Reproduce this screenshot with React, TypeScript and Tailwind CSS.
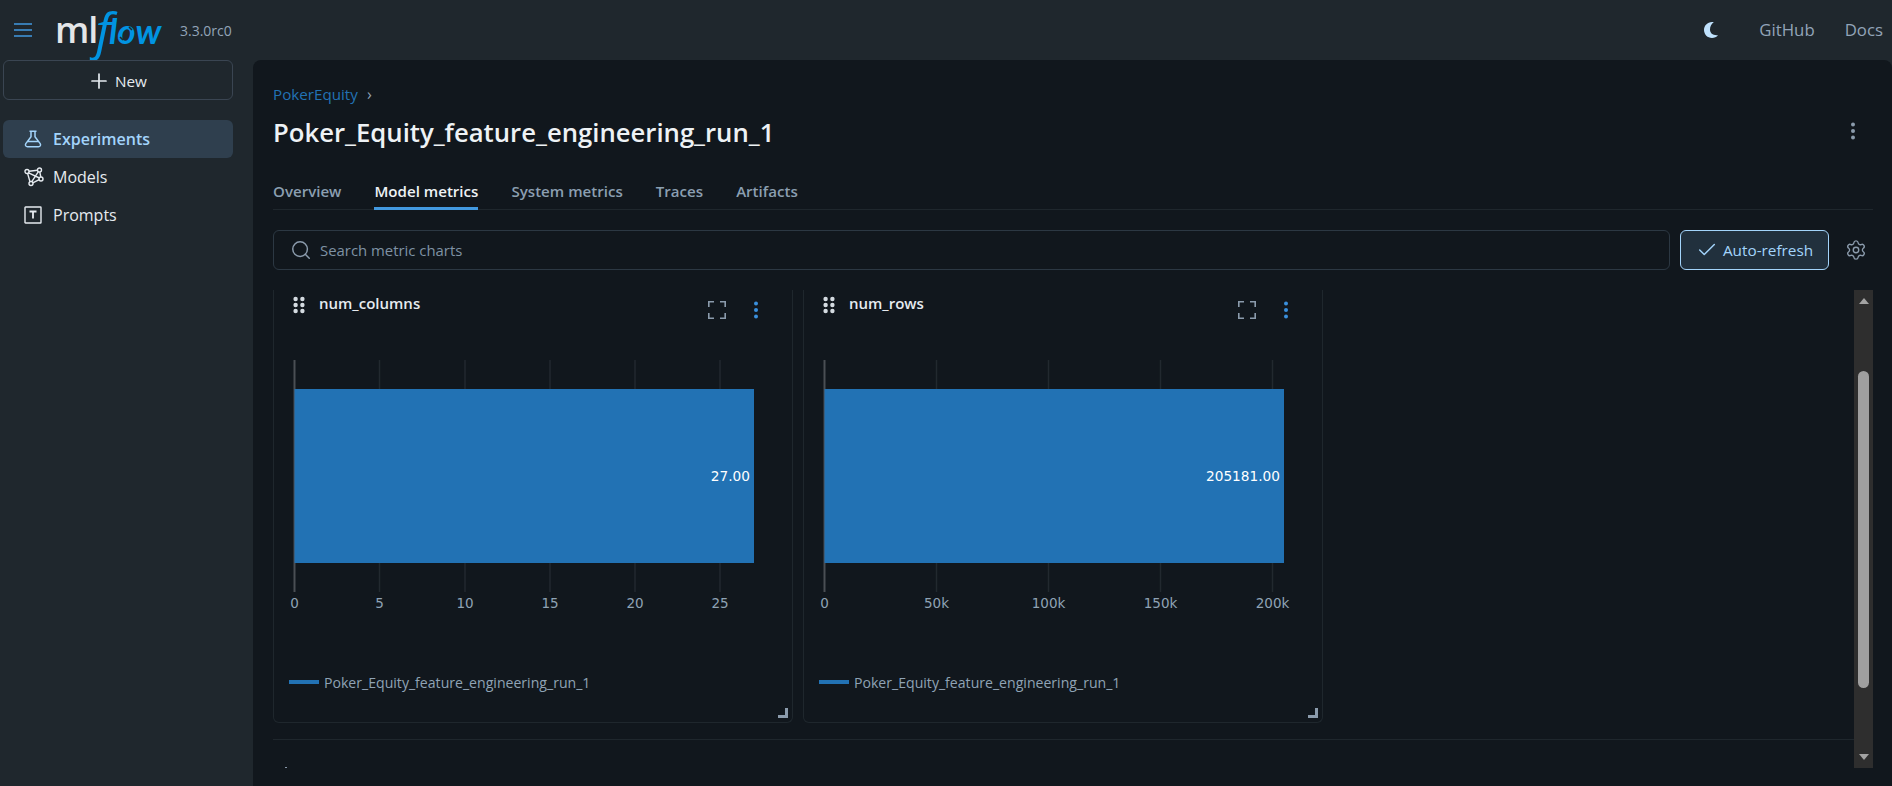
import React from 'react';
import { Check, Plus, Search, Settings } from 'lucide-react';

const FONT = "font-['Open_Sans','Noto_Sans',sans-serif]";

const BeakerIcon = () => (
    <svg width="18" height="18" viewBox="0 0 18 18" fill="none" stroke="currentColor" strokeWidth="1.5">
        <path d="M5.500 1.200h7M7 1.200v5.600L1.800 13.600c-.9 1.500 0 3.200 1.700 3.200h11c1.700 0 2.600-1.700 1.700-3.200L11 6.800V1.200M3.200 11.600h11.600" strokeLinejoin="round" />
    </svg>
);

const ModelsIcon = () => (
    <svg width="20" height="20" viewBox="0 0 20 20" fill="none" stroke="currentColor" strokeWidth="1.4">
        <circle cx="3" cy="4.5" r="2" />
        <circle cx="15.5" cy="3" r="2" />
        <circle cx="17" cy="12" r="2" />
        <circle cx="7" cy="16.5" r="2" />
        <path d="M5 4.300l8.500-1.100M15.800 5l1 5M15.200 12.600l-6.400 3.200M6 14.700L3.600 6.400M4.600 5.800l10.800 5.200M7.800 14.700l6.600-10" />
    </svg>
);

const PromptsIcon = () => (
    <svg width="18" height="18" viewBox="0 0 18 18" fill="none" stroke="currentColor">
        <rect x="1" y="1" width="16" height="16" strokeWidth="1.4" rx="0.5" />
        <path d="M5.500 5.500h7M9 5.500v7" strokeWidth="1.8" />
    </svg>
);

const Hamburger = () => (
    <svg width="18" height="14" viewBox="0 0 18 14" fill="none" stroke="#4299e0" strokeWidth="1.6">
        <path d="M0 1h18M0 7h18M0 13h18" />
    </svg>
);

const Crescent = () => (
    <svg width="14" height="16" viewBox="0 0 14 16" fill="#bfe1fc">
        <path d="M8 0C3.400.2 0 3.600 0 8s3.500 8 8 8c2.400 0 4.500-1 6-2.800-.5.1-1 .1-1.500.1C8.600 13.300 6 11 6 7.600 6 4.500 7.500 1.800 9.800.3 9.200.1 8.600 0 8 0z" />
    </svg>
);

const DragDots = () => (
    <svg width="12" height="18" viewBox="0 0 12 18" fill="#d5dbe1">
        {[3, 9, 15].map((y) => (
            <React.Fragment key={y}>
                <circle cx="2.6" cy={y} r="2.2" />
                <circle cx="9.4" cy={y} r="2.2" />
            </React.Fragment>
        ))}
    </svg>
);

const ExpandIcon = () => (
    <svg width="18" height="18" viewBox="0 0 18 18" fill="none" stroke="#8b9bac" strokeWidth="1.6">
        <path d="M.8 6V.8H6M12 .8h5.200V6M17.200 12v5.200H12M6 17.200H.8V12" />
    </svg>
);

const Kebab = ({ color }: { color: string }) => (
    <svg width="6" height="18" viewBox="0 0 6 18" fill={color}>
        <circle cx="3" cy="2.5" r="2" />
        <circle cx="3" cy="9" r="2" />
        <circle cx="3" cy="15.5" r="2" />
    </svg>
);

const MetricChart = (
    {
        ticks,
        label,
    }: {
        ticks: { x: number; text: string }[];
        label: string;
    },
) => (
    <svg width="520" height="256" viewBox="0 0 520 256" className="block">
        {ticks.map((t, i) => (
            <g key={t.text}>
                <line x1={t.x} x2={t.x} y1="0" y2="232" stroke={i === 0 ? '#4a4f54' : '#22292f'} strokeWidth={i === 0 ? 2 : 1.5} />
                <text x={t.x} y="248" fill="#8fa3b5" fontSize="13.5" textAnchor="middle" fontFamily="'DejaVu Sans',sans-serif">
                    {t.text}
                </text>
            </g>
        ))}
        <rect x="20.5" y="29" width="459.5" height="174" fill="#2272b4" />
        <text x="476" y="121" fill="#fff" fontSize="13.7" textAnchor="end" fontFamily="'DejaVu Sans',sans-serif">
            {label}
        </text>
    </svg>
);

const MetricCard = (
    {
        title,
        ticks,
        label,
    }: {
        title: string;
        ticks: { x: number; text: string }[];
        label: string;
    },
) => (
    <div className="relative h-[433px] w-[520px] shrink-0 rounded-b-md border-x border-b border-[#1f272d]">
        <div className="flex h-[70px] items-start pl-[19px] pr-[33px] pt-[6px]">
            <DragDots />
            <span className="ml-[14px] -mt-[3px] text-[15px] leading-5 font-semibold text-[#e6ebf0]">{title}</span>
            <div className="ml-auto mt-[5px] flex items-center gap-[27px]">
                <ExpandIcon />
                <Kebab color="#3a8fdc" />
            </div>
        </div>
        <MetricChart ticks={ticks} label={label} />
        <div className="mt-[57px] flex items-center pl-[15px] text-[14.1px] leading-5 text-[#8fa3b5]">
            <span className="mr-[5px] -mt-[3px] h-1 w-[30px] bg-[#2272b4]" />
            Poker_Equity_feature_engineering_run_1
        </div>
        <div className="absolute bottom-[4px] right-[4px] h-[10px] w-[10px] border-r-[3px] border-b-[3px] border-[#8b9bac]" />
    </div>
);

const NavItem = (
    {
        icon,
        text,
        active,
    }: {
        icon: React.ReactNode;
        text: string;
        active?: boolean;
    },
) => (
    <div className={active
        ? 'flex h-[38px] items-center rounded-md bg-[#2f3f4e] pl-[21px] text-[16px] font-semibold text-[#a3d4fb]'
        : 'flex h-[38px] items-center pl-[21px] text-[16px] text-[#e6ebf0]'}
    >
        <span className="flex w-[29px] items-center">{icon}</span>
        {text}
    </div>
);

const App = () => (
    <div className={`${FONT} flex h-[786px] w-full flex-col overflow-hidden bg-[#1f272d]`}>
        <header className="flex h-[60px] shrink-0 items-center pl-[14px] pr-[9px]">
            <Hamburger />
            <div className="ml-[23px] flex h-[50px] w-[105px] items-center leading-none">
                <span className="font-['Open_Sans',sans-serif] text-[36px] font-semibold tracking-[-1px] text-[#e4e6e8]">ml</span>
                <span className="-ml-[2px] font-['Open_Sans',sans-serif] text-[50px] italic text-[#0194e2]">f</span>
                <span className="relative -ml-[2px] font-['Lato',sans-serif] text-[35px] font-bold italic text-[#0194e2]">
                    low
                    <svg width="20" height="20" viewBox="0 0 20 20" fill="none" stroke="#1f272d" strokeWidth="1.6" className="absolute left-[7px] top-[11px]">
                        <path d="M13 3l3 3M4 13l3 3" />
                    </svg>
                </span>
            </div>
            <span className="ml-[20px] text-[14px] text-[#92a4b8]">3.3.0rc0</span>
            <span className="ml-auto mr-[41px]"><Crescent /></span>
            <span className="mr-[30px] text-[16.8px] text-[#92a4b8]">GitHub</span>
            <span className="text-[16.8px] text-[#92a4b8]">Docs</span>
        </header>
        <div className="flex min-h-0 flex-1">
            <aside className="w-[253px] shrink-0 pl-[3px] pr-5">
                <button className="flex h-[40px] w-full items-center justify-center rounded-md border border-[#3a4552] pr-[2px] pt-[2px] text-[15.3px] font-medium text-[#e6ebf0]">
                    <Plus size={24} strokeWidth={1.7} className="mr-[4px]" />
                    New
                </button>
                <nav className="mt-5">
                    <NavItem icon={<BeakerIcon />} text="Experiments" active />
                    <NavItem icon={<ModelsIcon />} text="Models" />
                    <NavItem icon={<PromptsIcon />} text="Prompts" />
                </nav>
            </aside>
            <main className="flex min-w-0 flex-1 flex-col rounded-t-lg bg-[#11171d] pl-5 pr-[19px] pt-[24px]">
                <div className="flex h-5 items-center text-[15.2px] text-[#2272b4]">
                    PokerEquity
                    <span className="ml-[9px] text-[16px] text-[#92a4b8]">›</span>
                </div>
                <div className="mt-[8px] flex h-[38px] items-center justify-between">
                    <h1 className="pt-[4px] text-[25.7px] font-semibold text-[#eef2f5]">Poker_Equity_feature_engineering_run_1</h1>
                    <span className="mr-[17px]"><Kebab color="#8b9bac" /></span>
                </div>
                <div className="mt-[24px] flex h-[36px] gap-[33px] border-b border-[#1f272d] text-[15.1px] font-semibold text-[#8b9fb1]">
                    <span className="pt-[6px]">Overview</span>
                    <span className="h-[36px] border-b-[3px] border-[#4299e0] pt-[6px] text-[#eef2f5]">Model metrics</span>
                    <span className="pt-[6px]">System metrics</span>
                    <span className="pt-[6px]">Traces</span>
                    <span className="pt-[6px]">Artifacts</span>
                </div>
                <div className="mt-5 flex items-center">
                    <div className="flex h-[40px] flex-1 items-center rounded-md border border-[#2c3843] pl-4 text-[14.9px] text-[#7f92a4]">
                        <Search size={22} strokeWidth={1.6} className="mr-[8px] text-[#8b9bac]" />
                        Search metric charts
                    </div>
                    <button className="ml-[10px] flex h-[40px] w-[149px] items-center justify-center rounded-md border border-[#a3d4fb] bg-[#21303d] text-[15.3px] text-[#a3d4fb]">
                        <Check size={22} strokeWidth={1.6} className="mr-[5px]" />
                        Auto-refresh
                    </button>
                    <Settings size={22} strokeWidth={1.5} className="ml-[16px] mr-[6px] text-[#8b9bac]" />
                </div>
                <div className="mt-5 flex h-[478px] items-start">
                    <div className="min-w-0 flex-1">
                        <div className="flex gap-[10px]">
                            <MetricCard
                                title="num_columns"
                                label="27.00"
                                ticks={[
                                    { x: 20.5, text: '0' },
                                    { x: 105.5, text: '5' },
                                    { x: 191, text: '10' },
                                    { x: 276, text: '15' },
                                    { x: 361, text: '20' },
                                    { x: 446, text: '25' },
                                ]}
                            />
                            <MetricCard
                                title="num_rows"
                                label="205181.00"
                                ticks={[
                                    { x: 20.5, text: '0' },
                                    { x: 132.5, text: '50k' },
                                    { x: 244.5, text: '100k' },
                                    { x: 356.5, text: '150k' },
                                    { x: 468.5, text: '200k' },
                                ]}
                            />
                        </div>
                        <div className="mt-[16px] border-t border-[#1f272d]" />
                        <div className="ml-[12px] mt-[27px] h-px w-[2px] bg-[#8b9bac]" />
                    </div>
                    <div className="flex h-[478px] w-[19px] shrink-0 flex-col items-center justify-between bg-[#2e2e2e] py-2">
                        <span className="h-0 w-0 border-x-[5px] border-b-[6px] border-x-transparent border-b-[#a3a3a3]" />
                        <span className="-my-[1px] h-[317px] w-[11px] rounded-md bg-[#9f9f9f]" />
                        <span className="h-0 w-0 border-x-[5px] border-t-[6px] border-x-transparent border-t-[#a3a3a3]" />
                    </div>
                </div>
            </main>
        </div>
    </div>
);

export default App;
